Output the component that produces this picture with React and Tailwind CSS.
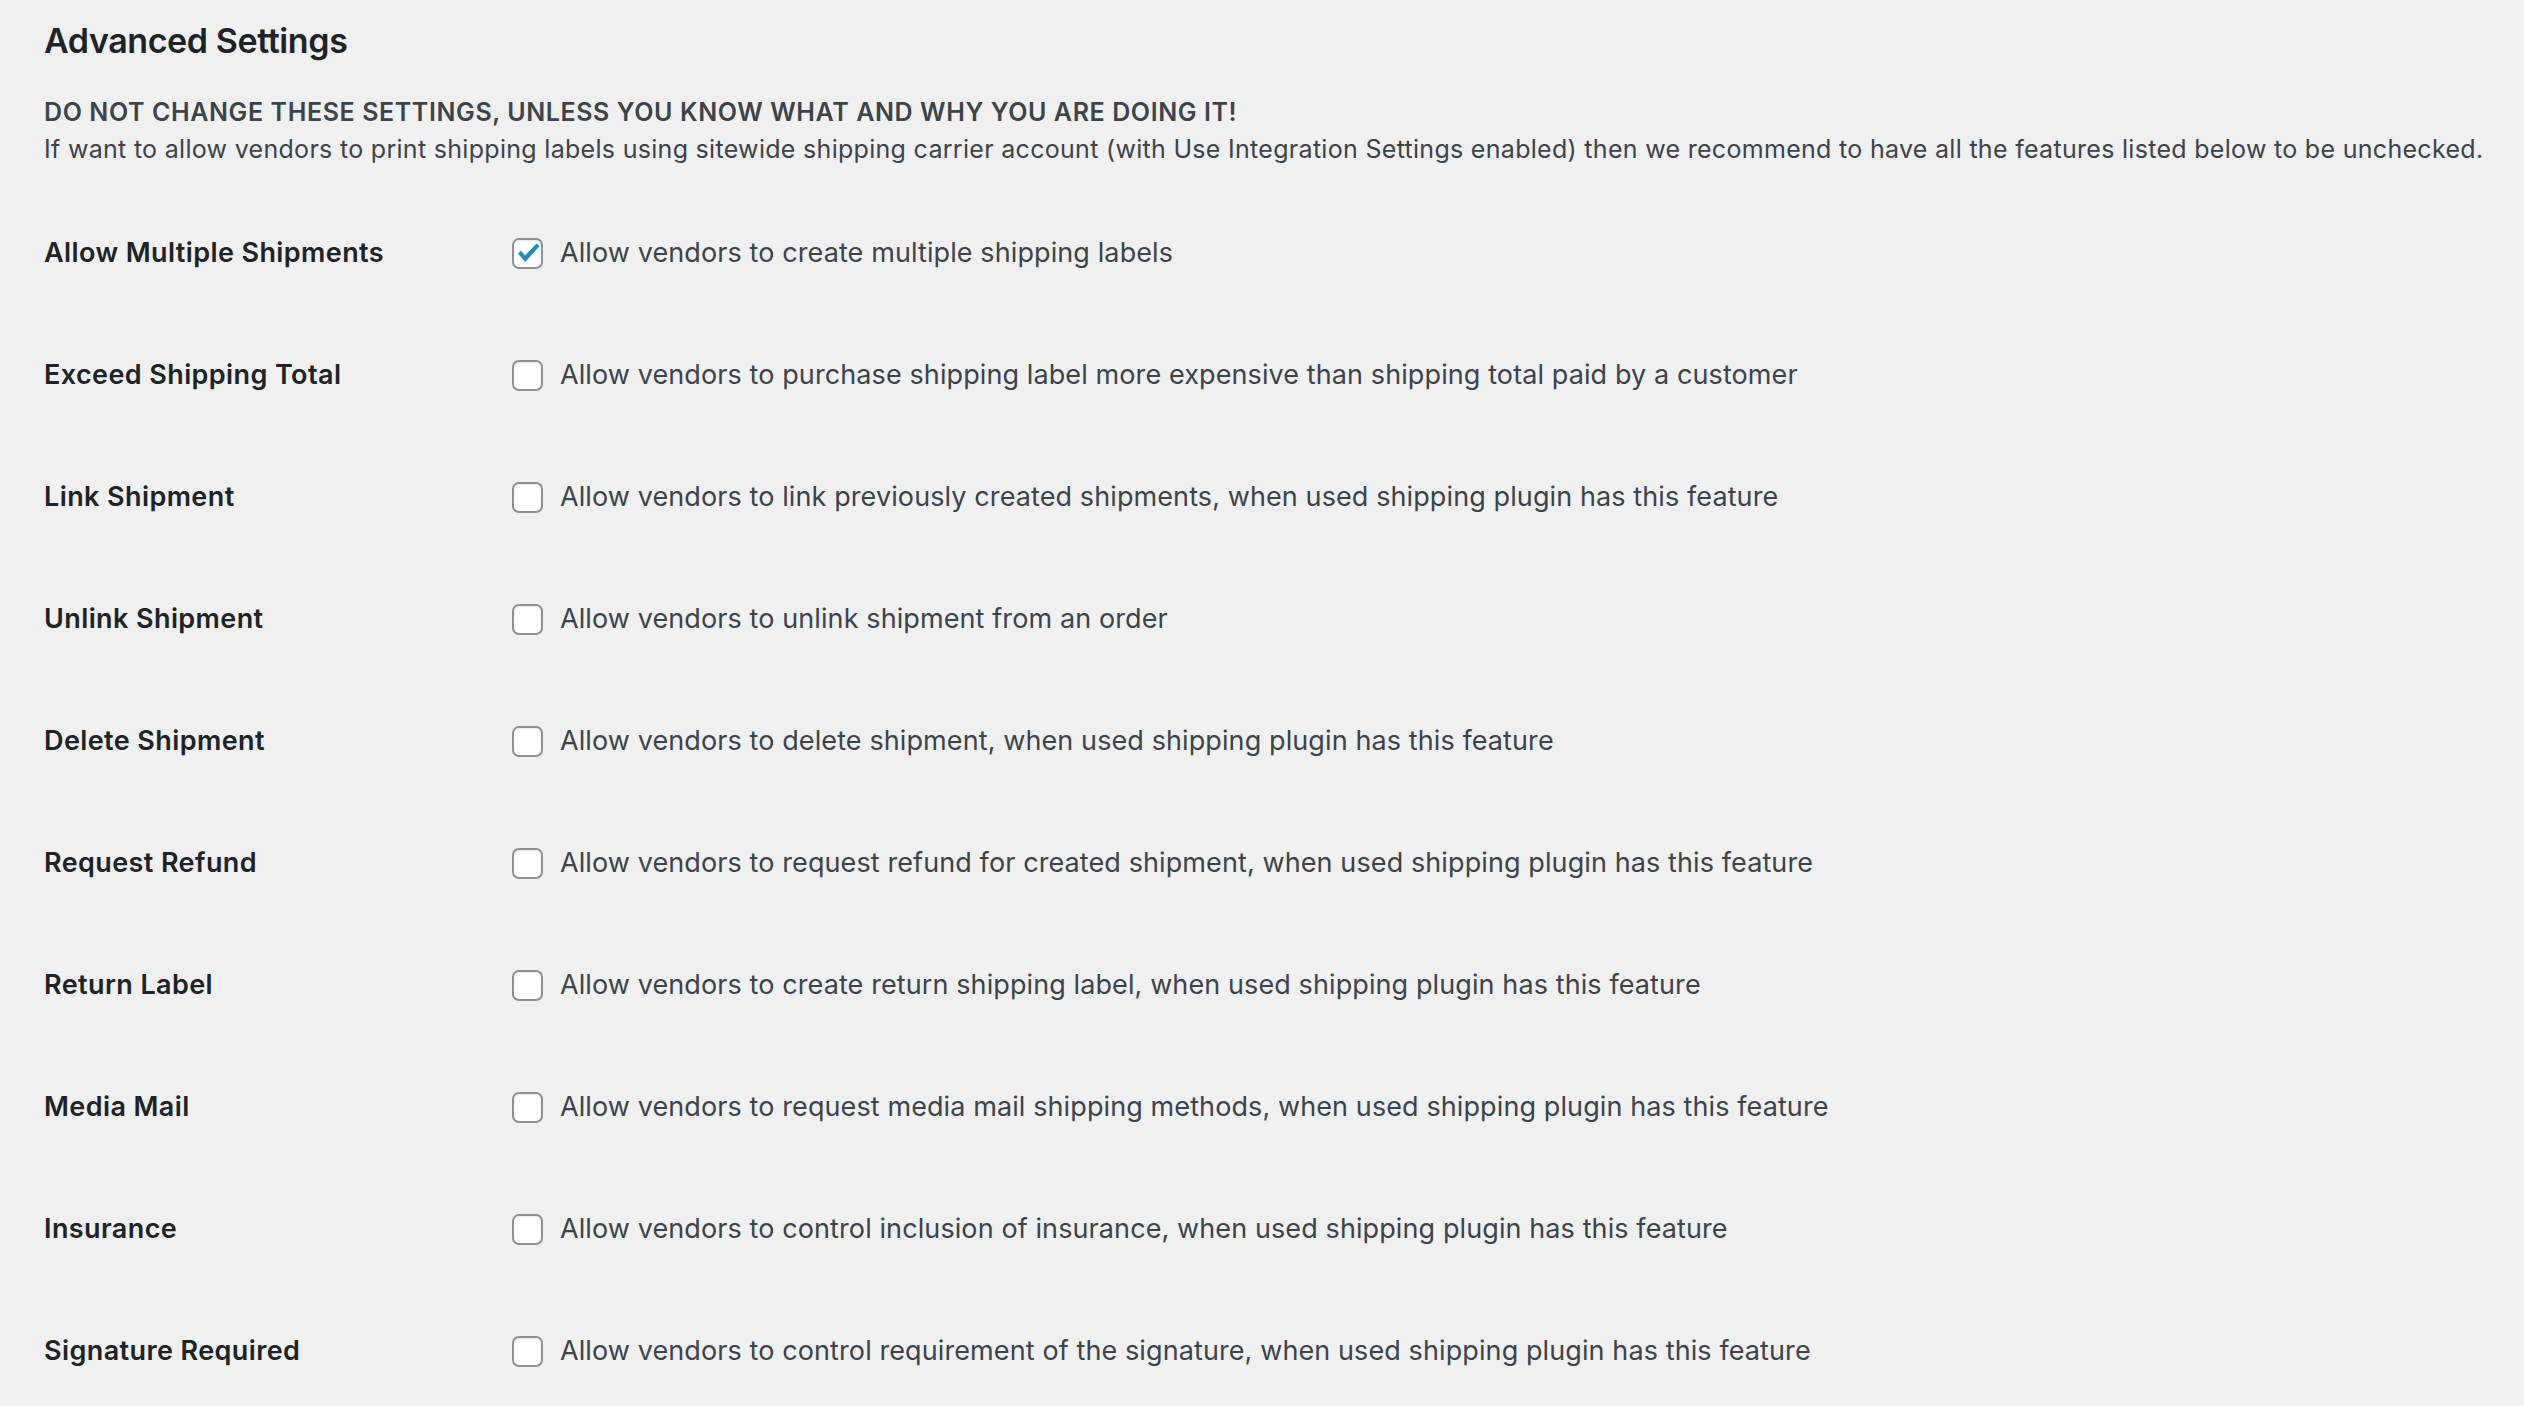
import React from "react";

const rows = [
  { label: "Allow Multiple Shipments", text: "Allow vendors to create multiple shipping labels", checked: true },
  { label: "Exceed Shipping Total", text: "Allow vendors to purchase shipping label more expensive than shipping total paid by a customer" },
  { label: "Link Shipment", text: "Allow vendors to link previously created shipments, when used shipping plugin has this feature" },
  { label: "Unlink Shipment", text: "Allow vendors to unlink shipment from an order" },
  { label: "Delete Shipment", text: "Allow vendors to delete shipment, when used shipping plugin has this feature" },
  { label: "Request Refund", text: "Allow vendors to request refund for created shipment, when used shipping plugin has this feature" },
  { label: "Return Label", text: "Allow vendors to create return shipping label, when used shipping plugin has this feature" },
  { label: "Media Mail", text: "Allow vendors to request media mail shipping methods, when used shipping plugin has this feature" },
  { label: "Insurance", text: "Allow vendors to control inclusion of insurance, when used shipping plugin has this feature" },
  { label: "Signature Required", text: "Allow vendors to control requirement of the signature, when used shipping plugin has this feature" },
];

function Checkbox({ checked }) {
  return (
    <span className="relative w-[31px] h-[31px] shrink-0 rounded-[7px] border-2 border-[#8c8f94] bg-white shadow-[inset_0_1px_2px_rgba(0,0,0,0.1)]">
      {checked && (
        <svg viewBox="0 0 31 31" className="absolute -left-[2px] -top-[2px] w-[31px] h-[31px]">
          <path d="M6 15.5 L9 12.8 L13 17.6 L24.5 5.5 L27.5 8.2 L13.2 24 Z" fill="#1e8cbe" />
        </svg>
      )}
    </span>
  );
}

export default function App() {
  return (
    <div className="min-h-screen bg-[#f0f0f1] pl-[44px] font-['Inter','Liberation_Sans',sans-serif]">
      <h2 className="h-[80px] flex items-center text-[34px] font-semibold text-[#1d2327] tracking-[-0.4px]">
        Advanced Settings
      </h2>
      <div className="mt-[14px] text-[25px] leading-[37px] text-[#3c434a]">
        <p className="font-semibold tracking-[0.6px]">DO NOT CHANGE THESE SETTINGS, UNLESS YOU KNOW WHAT AND WHY YOU ARE DOING IT!</p>
        <p className="tracking-[0.3px]">
          If want to allow vendors to print shipping labels using sitewide shipping carrier account (with Use Integration Settings enabled) then we recommend to have all the features listed below to be unchecked.
        </p>
      </div>
      <div className="mt-[24px]">
        {rows.map((r) => (
          <div key={r.label} className="h-[122px] flex items-center">
            <div className="w-[468px] text-[27px] font-semibold text-[#1d2327] tracking-[0.4px]">{r.label}</div>
            <label className="flex items-center gap-[17px] text-[27px] text-[#3c434a] tracking-[0.1px]">
              <Checkbox checked={r.checked} />
              <span>{r.text}</span>
            </label>
          </div>
        ))}
      </div>
    </div>
  );
}
